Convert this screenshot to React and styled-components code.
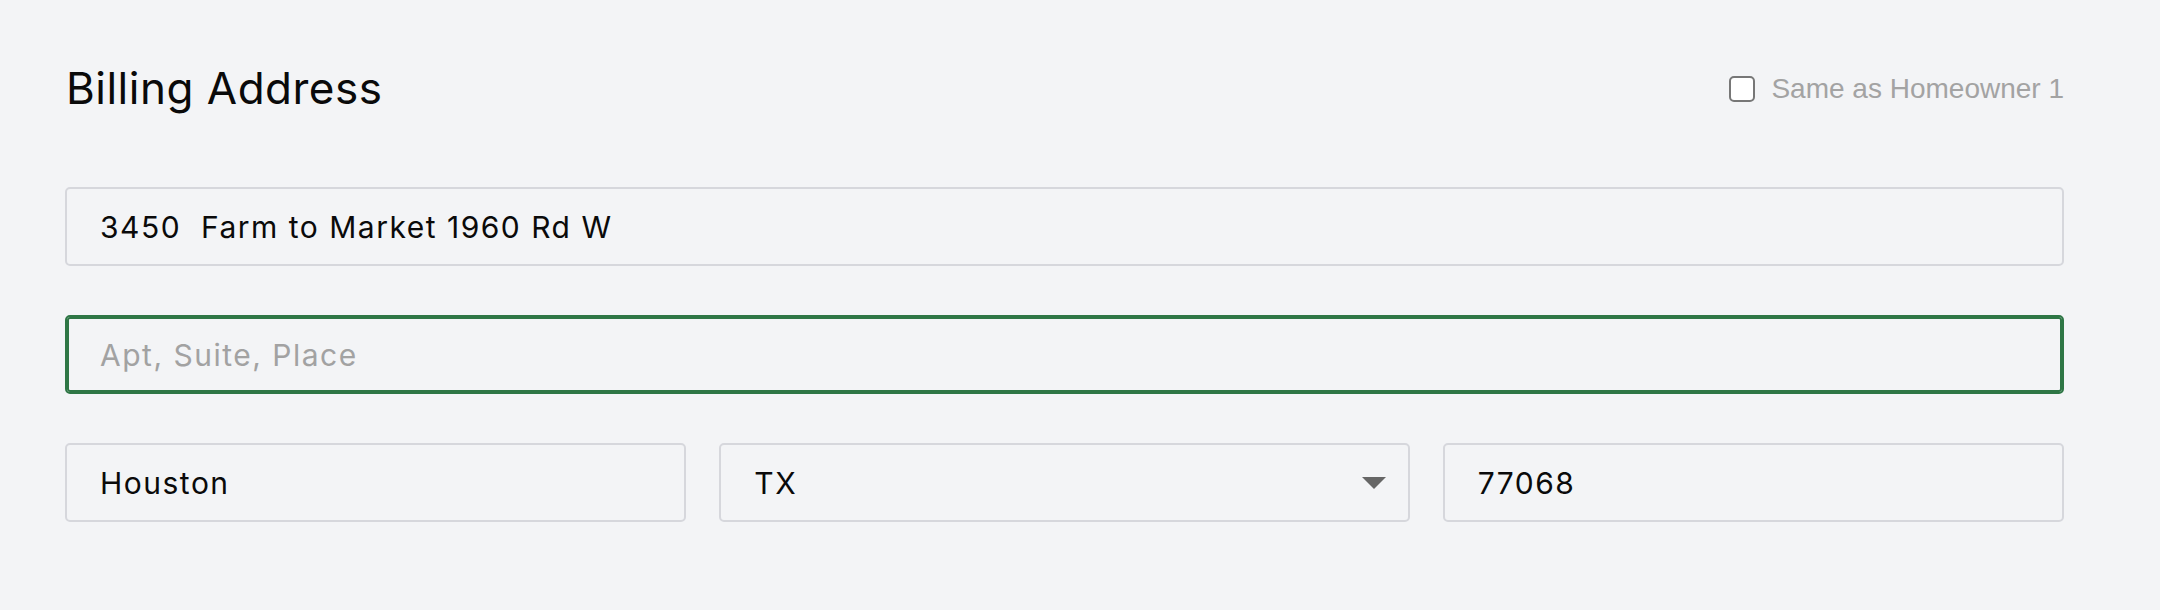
import React from 'react';
import styled, { createGlobalStyle } from 'styled-components';

const GlobalStyle = createGlobalStyle`
  html, body {
    margin: 0;
    padding: 0;
    background: #f3f4f6;
  }
  body {
    font-family: Inter, "Open Sans", sans-serif;
    color: #111;
  }
`

const Page = styled.div`
  min-height: 610px;
  box-sizing: border-box;
  padding: 62px 96px 0 65px;
  background: #f3f4f6;
`

const Header = styled.div`
  display: flex;
  justify-content: space-between;
  align-items: center;
  height: 53px;
  margin-bottom: 72px;
`

const Title = styled.h2`
  margin: 0 0 0 1px;
  font-family: Inter, sans-serif;
  font-size: 44px;
  font-weight: 400;
  line-height: 53px;
  letter-spacing: 0.5px;
  color: #0a0a0a;
`

const SameAs = styled.label`
  display: flex;
  align-items: center;
  gap: 16px;
  font-family: "Liberation Sans", Arial, sans-serif;
  font-size: 28px;
  color: #a3a3a3;
  cursor: pointer;
`

const Check = styled.input`
  appearance: none;
  margin: 0;
  width: 26px;
  height: 26px;
  box-sizing: border-box;
  border: 2px solid #777;
  border-radius: 5px;
  background: #fff;
`

const Form = styled.div`
  display: flex;
  flex-direction: column;
  gap: 49px;
`

const Row = styled.div`
  display: grid;
  grid-template-columns: 621fr 690fr 621fr;
  column-gap: 33px;
`

const Field = styled.input`
  display: block;
  width: 100%;
  height: 79px;
  box-sizing: border-box;
  margin: 0;
  padding: 0 33px;
  border: 2px solid ${p => (p.$active ? '#2e7645' : '#d6d7dc')};
  box-shadow: ${p => (p.$active ? 'inset 0 0 0 2px #2e7645' : 'none')};
  border-radius: 5px;
  background: #f3f4f6;
  font-family: Inter, sans-serif;
  font-size: 30px;
  letter-spacing: 1.5px;
  color: #0a0a0a;
  outline: none;
  caret-color: #000;

  &::placeholder {
    color: #a2a2a2;
  }
`

const SelectWrap = styled.div`
  position: relative;
`

const Select = styled.select`
  display: block;
  width: 100%;
  height: 79px;
  box-sizing: border-box;
  margin: 0;
  padding: 0 33px;
  border: 2px solid #d6d7dc;
  border-radius: 5px;
  background: #f3f4f6;
  font-family: Inter, sans-serif;
  font-size: 30px;
  letter-spacing: 1.5px;
  color: #0a0a0a;
  appearance: none;
  outline: none;
`

const Arrow = styled.svg`
  position: absolute;
  right: 24px;
  top: 50%;
  transform: translateY(-50%);
  pointer-events: none;
`

export default function App() {
  return (
    <>
      <GlobalStyle />
      <Page>
        <Header>
          <Title>Billing Address</Title>
          <SameAs>
            <Check type="checkbox" />
            Same as Homeowner 1
          </SameAs>
        </Header>
        <Form>
          <Field defaultValue="3450  Farm to Market 1960 Rd W" />
          <Field $active autoFocus placeholder="Apt, Suite, Place" />
          <Row>
            <Field defaultValue="Houston" />
            <SelectWrap>
              <Select defaultValue="TX">
                <option value="TX">TX</option>
                <option value="CA">CA</option>
                <option value="NY">NY</option>
              </Select>
              <Arrow width="24" height="12" viewBox="0 0 24 12">
                <path d="M0 0h24L12 12z" fill="#666" />
              </Arrow>
            </SelectWrap>
            <Field defaultValue="77068" />
          </Row>
        </Form>
      </Page>
    </>
  );
}
